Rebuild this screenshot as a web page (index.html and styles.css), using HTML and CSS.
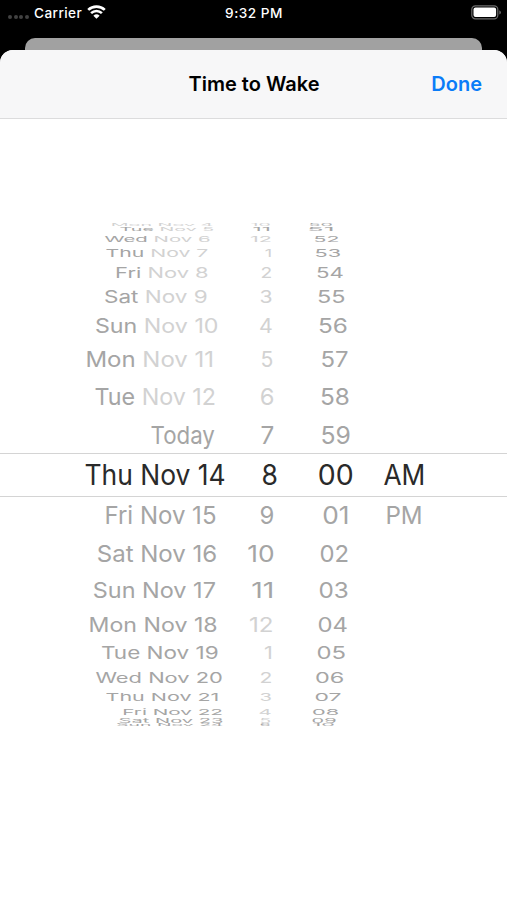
FILE: index.html
```html
<!DOCTYPE html>
<html>
	<head>
		<meta charset="UTF-8">
		<title>Time to Wake</title>
		<link rel="stylesheet" href="styles.css">
	</head>
	<body>
		<div class="phone">
			<div class="status">
				<div class="carrier">
					<span class="dots"><i></i><i></i><i></i><i></i></span>
					<span class="name">Carrier</span>
					<svg class="wifi" width="19" height="14" viewBox="0 0 19 14">
						<path d="M1.2 4.9a12 12 0 0 1 16.6 0" fill="none" stroke="#fff" stroke-width="2.7"/>
						<path d="M4.1 8.1a7.8 7.8 0 0 1 10.8 0" fill="none" stroke="#fff" stroke-width="2.6"/>
						<path d="M6.4 10.7a4.6 4.6 0 0 1 6.2 0L9.5 13.8z" fill="#fff"/>
					</svg>
				</div>
				<div class="time">9:32 PM</div>
				<svg class="battery" width="31" height="15" viewBox="0 0 31 15">
					<rect x="0.8" y="0.8" width="26" height="13" rx="3.6" fill="none" stroke="#6c6c6c" stroke-width="1.2"/>
					<rect x="2.5" y="2.5" width="22.6" height="9.6" rx="2" fill="#fff"/>
					<path d="M28.3 5.2q1.6 .8 1.6 2.2t-1.6 2.2z" fill="#6c6c6c"/>
				</svg>
			</div>
			<div class="behind"></div>
			<div class="sheet">
				<div class="nav">
					<span></span>
					<span class="title">Time to Wake</span>
					<span class="done">Done</span>
				</div>
				<div class="picker"></div>
			</div>
		</div>
		<script src="picker.js"></script>
	</body>
</html>
```
FILE: styles.css
```css
*{
	margin: 0;
	padding: 0;
	box-sizing: border-box;
}
body{
	background: #000;
	font-family: Inter, "Liberation Sans", sans-serif;
}
.phone{
	display: flex;
	flex-direction: column;
	width: 507px;
	height: 900px;
	overflow: hidden;
	background: #000;
}
.status{
	display: grid;
	grid-template-columns: 1fr auto 1fr;
	height: 38px;
	padding: 5px 5px 0 8px;
	color: #fff;
	font-size: 13.6px;
	font-weight: 500;
	line-height: 16px;
}
.carrier{
	display: flex;
}
.dots{
	display: flex;
	gap: 1.7px;
	padding-top: 10px;
	margin-right: 5px;
}
.dots i{
	width: 4px;
	height: 4px;
	border-radius: 2px;
	background: #424242;
}
.name{
	width: 49px;
	letter-spacing: 0.4px;
}
.wifi{
	margin-left: 4px;
}
.time{
	letter-spacing: 0.5px;
	margin-right: 2px;
}
.battery{
	justify-self: end;
}
.behind{
	flex: none;
	height: 12px;
	margin: 0 25px;
	border-radius: 10px 10px 0 0;
	background: #a1a1a1;
}
.sheet{
	flex: 1;
	background: #fff;
	border-radius: 13px 13px 0 0;
	overflow: hidden;
}
.nav{
	display: grid;
	grid-template-columns: 1fr auto 1fr;
	align-items: center;
	height: 69px;
	padding: 0 25px;
	border-bottom: 1px solid #dcdcdd;
	background: #f7f7f8;
	font-size: 20px;
	font-weight: 600;
}
.title{
	padding-left: 1px;
}
.done{
	justify-self: end;
	color: #0a7cf8;
}
.picker{
	padding-top: 103px;
}
.row{
	display: flex;
}
.cell{
	display: flex;
	align-items: center;
	height: 100%;
}
.date{
	width: 236px;
}
.hour{
	width: 60px;
}
.minute{
	width: 70px;
}
.label{
	flex: none;
	color: #a5a5a5;
	font-size: 24.5px;
	line-height: 1;
	white-space: nowrap;
	transform-origin: 0 50%;
}
.dim{
	color: #d2d2d2;
}
.selected{
	border: solid #d4d4d4;
	border-width: 1px 0;
}
.selected .label{
	color: #2a2a2a;
	font-size: 28px;
}
```
FILE: picker.js
```js
var oPicker = document.querySelector('.picker');
var ctx = document.createElement('canvas').getContext('2d');
var cols = ['date', 'hour', 'minute', 'ampm'];
var col_left = [0, 236, 296, 366];

// [row height, center, cap height, labels: [text, left, right]]   "~" dims the text after it
var rows = [
	[5, 224.9, 2.6, ['~Mon Nov 4', 112, 213], ['~10', 251, 270], ['50', 309, 332]],
	[6, 229.2, 3.6, ['Tue ~Nov 5', 120, 214], ['11', 253, 269.5], ['51', 308, 333]],
	[12, 238.6, 5.7, ['Wed ~Nov 6', 104, 210], ['~12', 250.5, 271.5], ['52', 314, 339]],
	[17, 253, 8, ['Thu ~Nov 7', 106, 208], ['~1', 265, 271], ['53', 315, 340.5]],
	[22, 272.6, 10.4, ['Fri ~Nov 8', 116.5, 208], ['~2', 261, 272], ['54', 316.5, 343.5]],
	[27, 297.3, 12.6, ['Sat ~Nov 9', 104.5, 207], ['~3', 260, 272], ['55', 317.5, 345]],
	[31, 326.6, 14.4, ['Sun ~Nov 10', 95.5, 217.5], ['~4', 259.5, 272.5], ['56', 318.5, 347]],
	[35, 359.6, 15.6, ['Mon ~Nov 11', 87, 212.5], ['~5', 261, 273], ['57', 321, 348]],
	[38, 396.3, 17, ['Tue ~Nov 12', 95, 215.5], ['~6', 260.3, 273.7], ['58', 320.5, 349]],
	[38, 435, 17.8, ['Today', 151, 215.5], ['7', 261, 273.7], ['59', 321, 350]],
	[44, 474.7, 20.4, ['Thu Nov 14', 85, 225], ['8', 262, 277], ['00', 318.3, 352.3], ['AM', 383, 423.5]],
	[38, 515.2, 17.8, ['Fri Nov 15', 106, 216], ['9', 260, 273.5], ['01', 322.8, 347.7], ['PM', 387, 421]],
	[37, 554.3, 17, ['Sat Nov 16', 97.3, 216.5], ['10', 248, 273.5], ['02', 320, 348.5]],
	[35, 590.8, 15.7, ['Sun Nov 17', 93.3, 215.5], ['11', 252, 272.5], ['03', 319, 348]],
	[32, 624.3, 14.4, ['Mon Nov 18', 90, 217], ['~12', 249.5, 273], ['04', 318, 347.5]],
	[27, 653.3, 12.6, ['Tue Nov 19', 101.5, 218], ['~1', 264.5, 271.5], ['05', 317, 345.5]],
	[22, 677.9, 10.2, ['Wed Nov 20', 95, 222], ['~2', 260, 272], ['06', 315.5, 343.5]],
	[17, 697.3, 8, ['Thu Nov 21', 106, 218], ['~3', 260, 271.5], ['07', 315, 341]],
	[12, 711.6, 5.9, ['Fri Nov 22', 123.5, 222.5], ['~4', 259, 271.5], ['08', 312.5, 338.5]],
	[6, 720.6, 4, ['Sat Nov 23', 119, 223], ['~5', 260, 271], ['09', 312, 336]],
	[5, 725.4, 2.3, ['Sun Nov 24', 116.5, 223], ['6', 260, 270], ['10', 313, 334]]
];
// keeps the soft edge of the glyphs inside left and right
var inset = 0.4;

var top_y = 222;
for(var i=0; i<rows.length; i++){
	var r = rows[i];
	var selected = r[0] == 44;
	var size = selected ? 28 : 24.5;
	var oRow = document.createElement('div');
	oRow.className = selected ? 'row selected' : 'row';
	oRow.style.height = r[0] + 'px';
	ctx.font = size + 'px Inter';

	for(var j=3; j<r.length; j++){
		var text = r[j][0].replace('~', '');
		var m = ctx.measureText(text);
		// horizontal stretch and side bearing of the label
		var sx = (r[j][2] - r[j][1] - inset*2) / (m.actualBoundingBoxRight + m.actualBoundingBoxLeft);
		var sy = r[2] / (size * 0.727);
		var dx = r[j][1] + inset - col_left[j-3] + m.actualBoundingBoxLeft * sx;
		var dy = r[1] - top_y - r[0]/2;

		var oCell = document.createElement('div');
		oCell.className = 'cell ' + cols[j-3];
		var oLabel = document.createElement('span');
		oLabel.className = 'label';
		var parts = r[j][0].split('~');
		oLabel.textContent = parts[0];
		if(parts.length > 1){
			var oDim = document.createElement('span');
			oDim.className = 'dim';
			oDim.textContent = parts[1];
			oLabel.appendChild(oDim);
		}
		oLabel.style.transform = 'translate('+dx+'px,'+dy+'px) scale('+sx+','+sy+')';
		oCell.appendChild(oLabel);
		oRow.appendChild(oCell);
	}
	oPicker.appendChild(oRow);
	top_y += r[0];
}
```
